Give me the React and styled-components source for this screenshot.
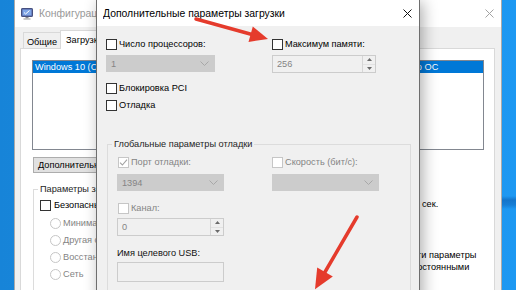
import React from "react";
import styled, { createGlobalStyle } from "styled-components";

const GlobalStyle = createGlobalStyle`
  html, body { margin: 0; padding: 0; }
  body {
    width: 516px; height: 290px; overflow: hidden;
    font-family: "Liberation Sans", Arial, sans-serif;
  }
  * { box-sizing: border-box; }
`;

const FS = "9.2px";
const GRAY_TEXT = "#848484";

const Desktop = styled.div`
  position: relative;
  width: 516px;
  height: 290px;
  overflow: hidden;
  font-size: ${FS};
  background:
    linear-gradient(180deg, transparent 196px, rgba(0, 50, 130, 0.35) 200px, rgba(0, 50, 130, 0.25) 205px, transparent 209px) right top / 16px 290px no-repeat,
    linear-gradient(90deg, #1784d8 0%, #1a8fe4 50%, #1d98f2 100%);
`;

const Window = styled.div`
  position: absolute;
  left: ${(p) => p.$x}px;
  top: -1px;
  width: ${(p) => p.$w}px;
  height: 320px;
  background: #f0f0f0;
  border: 1px solid ${(p) => (p.$active ? "#6e6e6e" : "#aaaaaa")};
  display: flex;
  flex-direction: column;
  z-index: ${(p) => (p.$active ? 2 : 1)};
  box-shadow: ${(p) => (p.$active ? "3px 3px 14px rgba(0,0,0,0.32)" : "none")};
`;

const TitleBar = styled.div`
  height: ${(p) => p.$h}px;
  flex: none;
  background: #fff;
  display: flex;
  align-items: center;
  padding: 0 ${(p) => p.$pr}px 0 ${(p) => p.$pl}px;
  gap: 6px;
`;

const TitleText = styled.span`
  flex: 1;
  font-size: 10.4px;
  color: ${(p) => (p.$active ? "#000" : "#999")};
  white-space: nowrap;
  overflow: hidden;
`;

const CloseGlyph = ({ color }) => (
  <svg width="9" height="9" viewBox="0 0 9 9">
    <path d="M0.5 0.5 L8.5 8.5 M8.5 0.5 L0.5 8.5" stroke={color} strokeWidth="1" />
  </svg>
);

const AppIcon = () => (
  <svg width="12" height="12" viewBox="0 0 12 12">
    <rect x="0.5" y="0.5" width="11" height="8" rx="0.6" fill="#5a6aa8" stroke="#46507e" />
    <rect x="1.6" y="1.6" width="8.8" height="5.8" fill="#7fa6e6" />
    <path d="M3 4.5 L4.6 6 L8.5 2.5" stroke="#fff" strokeWidth="1" fill="none" />
    <rect x="4.5" y="9" width="3" height="1.4" fill="#8a8a8a" />
    <rect x="2.5" y="10.4" width="7" height="1.2" fill="#a9a9a9" />
  </svg>
);

/* ---------- back window ---------- */

const BackBody = styled.div`
  flex: 1;
  display: flex;
  flex-direction: column;
  padding: 3px 6px 0 5px;
`;

const TabStrip = styled.div`
  display: flex;
  align-items: flex-end;
  height: 18px;
  padding-left: 3px;
`;

const Tab = styled.div`
  height: ${(p) => (p.$active ? 19 : 16)}px;
  margin-bottom: ${(p) => (p.$active ? -1 : 0)}px;
  margin-left: ${(p) => (p.$active ? -1 : 0)}px;
  width: ${(p) => (p.$w ? `${p.$w}px` : "auto")};
  padding: ${(p) => (p.$active ? "0 5px" : "2px 0 0")};
  border: 1px solid #d9d9d9;
  border-bottom: none;
  background: ${(p) => (p.$active ? "#fff" : "#f0f0f0")};
  display: flex;
  align-items: center;
  justify-content: ${(p) => (p.$active ? "flex-start" : "center")};
  position: relative;
  z-index: ${(p) => (p.$active ? 1 : 0)};
  white-space: nowrap;
`;

const TabPanel = styled.div`
  flex: 1;
  background: #fff;
  border: 1px solid #d9d9d9;
  padding: 11px 0 0 11px;
  display: flex;
  flex-direction: column;
`;

const ListBox = styled.div`
  width: 452px;
  height: 90px;
  flex: none;
  border: 1px solid #828790;
  background: #fff;
  overflow: hidden;
`;

const ListItem = styled.div`
  height: 12px;
  line-height: 12px;
  background: #0078d7;
  color: #fff;
  padding-left: 2px;
  white-space: nowrap;
`;

const LowerArea = styled.div`
  display: flex;
`;

const LeftCol = styled.div`
  width: 300px;
  flex: none;
  display: flex;
  flex-direction: column;
  align-items: flex-start;
`;

const PushButton = styled.div`
  margin: 7px 0 0 1px;
  width: 170px;
  height: 16px;
  background: #e1e1e1;
  border: 1px solid #adadad;
  padding-left: 4px;
  display: flex;
  align-items: center;
  white-space: nowrap;
  overflow: hidden;
`;

const Group = styled.fieldset`
  margin: ${(p) => p.$mt}px 0 0 1px;
  width: ${(p) => p.$w}px;
  border: 1px solid #dcdcdc;
  padding: 0 0 10px ${(p) => p.$pl}px;
  min-width: 0;
  display: flex;
  flex-direction: column;
  align-items: flex-start;
`;

const Legend = styled.legend`
  padding: 0 2px;
  margin-left: ${(p) => p.$ml}px;
  line-height: 11px;
  height: 11px;
  color: #1e1e1e;
  white-space: nowrap;
`;

const RightCol = styled.div`
  margin-left: 8px;
  display: flex;
  flex-direction: column;
`;

const TimeoutRow = styled.div`
  margin-top: 45px;
  height: 18px;
  display: flex;
  align-items: center;
`;

const SmallField = styled.div`
  margin-left: 34px;
  width: 44px;
  height: 18px;
  border: 1px solid #7a7a7a;
  background: #fff;
`;

const Unit = styled.span`
  margin-left: 4px;
`;

/* ---------- controls ---------- */

const CheckRow = styled.div`
  display: flex;
  align-items: ${(p) => (p.$multi ? "flex-start" : "center")};
  gap: ${(p) => p.$gap ?? 2}px;
  margin: ${(p) => p.$mt ?? 0}px 0 0 ${(p) => p.$ml ?? 0}px;
  min-height: 11px;
  line-height: ${(p) => (p.$multi ? "12px" : "11px")};
  color: ${(p) => (p.$disabled ? GRAY_TEXT : "#000")};
  white-space: nowrap;
`;

const Box = styled.span`
  width: 11px;
  height: 11px;
  flex: none;
  border: 1px solid ${(p) => (p.$disabled ? "#c6c6c6" : "#333")};
  background: #fff;
  display: inline-flex;
  align-items: center;
  justify-content: center;
  margin-top: ${(p) => (p.$multi ? 1 : 0)}px;
`;

const RadioDot = styled.span`
  width: 11px;
  height: 11px;
  flex: none;
  border-radius: 50%;
  border: 1px solid #c6c6c6;
  background: #fff;
`;

const Check = ({ label, disabled, checked, mt, ml, multi, gap, children }) => (
  <CheckRow $disabled={disabled} $mt={mt} $ml={ml} $multi={multi} $gap={gap}>
    <Box $disabled={disabled} $multi={multi}>
      {checked && (
        <svg width="9" height="9" viewBox="0 0 9 9">
          <path d="M1 4.6 L3.4 7 L8 1.6" stroke="#a2a2a2" strokeWidth="1.1" fill="none" />
        </svg>
      )}
    </Box>
    <span>{children || label}</span>
  </CheckRow>
);

const Radio = ({ label, mt }) => (
  <CheckRow $disabled $mt={mt} $ml={10} $gap={2}>
    <RadioDot />
    <span>{label}</span>
  </CheckRow>
);

const ComboBox = styled.div`
  width: ${(p) => p.$w}px;
  height: 17px;
  background: #cccccc;
  border: 1px solid #cccccc;
  color: ${GRAY_TEXT};
  display: flex;
  align-items: center;
  justify-content: space-between;
  padding: 0 5px 0 4px;
`;

const Chevron = () => (
  <svg width="9" height="5" viewBox="0 0 9 5">
    <path d="M0.5 0.5 L4.5 4.5 L8.5 0.5" stroke="#a8a8a8" strokeWidth="1" fill="none" />
  </svg>
);

const Combo = ({ w, value }) => (
  <ComboBox $w={w}>
    <span>{value}</span>
    <Chevron />
  </ComboBox>
);

const SpinBox = styled.div`
  width: ${(p) => p.$w}px;
  height: ${(p) => p.$h ?? 18}px;
  margin-top: ${(p) => p.$mt ?? 0}px;
  border: 1px solid #cccccc;
  background: #f0f0f0;
  display: flex;
  color: ${GRAY_TEXT};
`;

const SpinValue = styled.div`
  flex: 1;
  padding-left: 4px;
  display: flex;
  align-items: center;
`;

const SpinButtons = styled.div`
  width: 13px;
  flex: none;
  display: flex;
  flex-direction: column;
  border-left: 1px solid #d6d6d6;
`;

const SpinHalf = styled.div`
  flex: 1;
  display: flex;
  align-items: center;
  justify-content: center;
  border-top: ${(p) => (p.$down ? "1px solid #e2e2e2" : "none")};
`;

const Spin = ({ w, value, mt }) => (
  <SpinBox $w={w} $mt={mt}>
    <SpinValue>{value}</SpinValue>
    <SpinButtons>
      <SpinHalf>
        <svg width="5" height="3" viewBox="0 0 5 3">
          <path d="M0 3 L2.5 0 L5 3 Z" fill="#6a6a6a" />
        </svg>
      </SpinHalf>
      <SpinHalf $down>
        <svg width="5" height="3" viewBox="0 0 5 3">
          <path d="M0 0 L2.5 3 L5 0 Z" fill="#6a6a6a" />
        </svg>
      </SpinHalf>
    </SpinButtons>
  </SpinBox>
);

const TextField = styled.div`
  width: ${(p) => p.$w}px;
  height: 20px;
  margin-top: ${(p) => p.$mt}px;
  border: 1px solid #cccccc;
  background: #f0f0f0;
`;

const PlainLabel = styled.div`
  margin-top: ${(p) => p.$mt}px;
  line-height: 11px;
  height: 11px;
  color: #111;
  white-space: nowrap;
`;

/* ---------- front dialog ---------- */

const DialogBody = styled.div`
  flex: 1;
  padding: 13px 0 0 9px;
  display: flex;
  flex-direction: column;
  align-items: flex-start;
`;

const TwoCols = styled.div`
  display: grid;
  grid-template-columns: ${(p) => p.$c1}px 1fr;
  row-gap: ${(p) => p.$gap}px;
  align-items: start;
  margin-top: ${(p) => p.$mt ?? 0}px;
`;

const Overlay = styled.svg`
  position: absolute;
  left: 0;
  top: 0;
  z-index: 10;
  pointer-events: none;
`;

const RED = "#e53b2c";

export default function App() {
  return (
    <>
      <GlobalStyle />
      <Desktop>
        <Window $x={14} $w={488}>
          <TitleBar $h={27} $pl={6} $pr={7}>
            <AppIcon />
            <TitleText>Конфигурация системы</TitleText>
            <CloseGlyph color="#a3a3a3" />
          </TitleBar>
          <BackBody>
            <TabStrip>
              <Tab $w={38}>Общие</Tab>
              <Tab $active>Загрузка</Tab>
            </TabStrip>
            <TabPanel>
              <ListBox>
                <ListItem>
                  Windows 10 (C:\WINDOWS) : Текущая операционная система; Загружаемая по умолчанию ОС
                </ListItem>
              </ListBox>
              <LowerArea>
                <LeftCol>
                  <PushButton>Дополнительные параметры...</PushButton>
                  <Group $mt={11} $w={290} $pl={6}>
                    <Legend $ml={-2}>Параметры загрузки</Legend>
                    <Check label="Безопасный режим" mt={5} gap={3} />
                    <Radio label="Минимальная" mt={7} />
                    <Radio label="Другая оболочка" mt={6} />
                    <Radio label="Восстановление Active Directory" mt={6} />
                    <Radio label="Сеть" mt={6} />
                  </Group>
                </LeftCol>
                <RightCol>
                  <TimeoutRow>
                    <SmallField />
                    <Unit>сек.</Unit>
                  </TimeoutRow>
                  <Check multi mt={36} ml={20} gap={3}>
                    Сделать эти параметры
                    <br />
                    загрузки постоянными
                  </Check>
                </RightCol>
              </LowerArea>
            </TabPanel>
          </BackBody>
        </Window>

        <Window $x={96} $w={324} $active>
          <TitleBar $h={26} $pl={6} $pr={7}>
            <TitleText $active>Дополнительные параметры загрузки</TitleText>
            <CloseGlyph color="#111" />
          </TitleBar>
          <DialogBody>
            <TwoCols $c1={166} $gap={5}>
              <Check label="Число процессоров:" />
              <Check label="Максимум памяти:" />
              <Combo w={109} value="1" />
              <Spin w={104} value="256" />
            </TwoCols>
            <Check label="Блокировка PCI" mt={10} />
            <Check label="Отладка" mt={6} />
            <Group $mt={28} $w={304} $pl={9}>
              <Legend $ml={-5}>Глобальные параметры отладки</Legend>
              <TwoCols $c1={155} $gap={6} $mt={7}>
                <Check label="Порт отладки:" disabled checked ml={1} />
                <Check label="Скорость (бит/с):" disabled />
                <Combo w={107} value="1394" />
                <Combo w={107} value="" />
              </TwoCols>
              <Check label="Канал:" disabled mt={12} ml={1} />
              <Spin w={107} value="0" mt={4} />
              <PlainLabel $mt={12}>Имя целевого USB:</PlainLabel>
              <TextField $w={107} $mt={3} />
            </Group>
          </DialogBody>
        </Window>

        <Overlay width="516" height="290" viewBox="0 0 516 290">
          <line x1="196" y1="19" x2="252" y2="34.5" stroke={RED} strokeWidth="3.5" strokeLinecap="round" />
          <polygon points="268,39 248.5,41.9 252.8,26.5" fill={RED} />
          <line x1="357" y1="217" x2="325" y2="272" stroke={RED} strokeWidth="3.5" strokeLinecap="round" />
          <polygon points="315,289.3 317.2,267.5 332.8,276.5" fill={RED} />
        </Overlay>
      </Desktop>
    </>
  );
}
